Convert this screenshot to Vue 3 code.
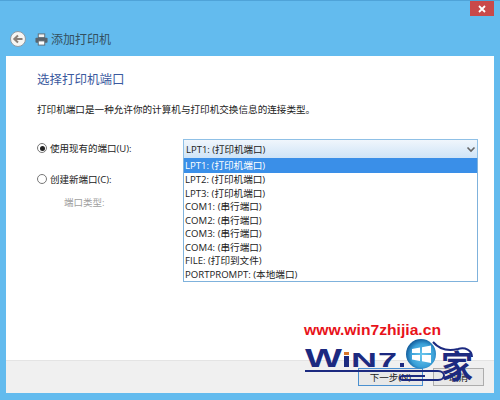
<template>
  <div class="window">
    <div class="titlebar">
      <button class="close">
        <svg width="10" height="10" viewBox="0 0 10 10">
          <path d="M2 2 L8 8 M8 2 L2 8" stroke="#fff" stroke-width="1.8" />
        </svg>
      </button>
      <div class="nav">
        <svg width="20" height="20" viewBox="0 0 20 20">
          <circle cx="10" cy="10" r="7.5" fill="#f7f5f2" stroke="#8d9aa5" stroke-width="1" />
          <path d="M14.5 10 H6.5 M10 6.5 L6.3 10 L10 13.5" fill="none" stroke="#8b8078" stroke-width="2" />
        </svg>
        <svg class="printer" width="13" height="13" viewBox="0 0 14 14">
          <rect x="3.5" y="1" width="7" height="4" fill="#f2f2f2" stroke="#5f6b74" />
          <rect x="0.5" y="5" width="13" height="5.5" rx="1" fill="#59646d" />
          <rect x="3.5" y="8.5" width="7" height="4.5" fill="#fff" stroke="#5f6b74" />
        </svg>
        <span class="wizard-title">添加打印机</span>
      </div>
    </div>

    <div class="panel">
      <div class="content">
        <h1 class="heading">选择打印机端口</h1>
        <p class="desc">打印机端口是一种允许你的计算机与打印机交换信息的连接类型。</p>

        <div class="form">
          <div class="options">
            <label class="radio-row">
              <span class="radio checked"></span>
              <span>使用现有的端口(U):</span>
            </label>
            <label class="radio-row second">
              <span class="radio"></span>
              <span>创建新端口(C):</span>
            </label>
            <div class="port-type">端口类型:</div>
          </div>

          <div class="select">
            <div class="select-box">
              <span>{{ ports[0] }}</span>
              <svg width="10" height="7" viewBox="0 0 10 7">
                <path d="M1.5 1.5 L5 5 L8.5 1.5" fill="none" stroke="#666" stroke-width="1.6" />
              </svg>
            </div>
            <ul class="dropdown">
              <li
                  v-for="port, idx in ports"
                  :key="port"
                  :class="{ active: idx === 0 }">
                {{ port }}
              </li>
            </ul>
          </div>
        </div>
      </div>

      <div class="footer">
        <button class="btn primary">下一步(N)</button>
        <button class="btn">取消</button>
      </div>
    </div>

    <!-- site watermark, drawn in its own coordinates over the bottom right corner -->
    <svg class="watermark" width="190" height="75" viewBox="0 0 190 75">
      <defs>
        <radialGradient id="orb" cx="0.55" cy="0.55" r="0.55">
          <stop offset="0" stop-color="#6cc8ee" />
          <stop offset="0.7" stop-color="#3aa0d8" />
          <stop offset="1" stop-color="#15609f" />
        </radialGradient>
      </defs>
      <text class="wm-url" x="4" y="15" textLength="137" lengthAdjust="spacingAndGlyphs">www.win7zhijia.cn</text>
      <text class="wm-big" x="5" y="47" font-size="26" textLength="37" lengthAdjust="spacingAndGlyphs">W</text>
      <rect x="44" y="32" width="5" height="3" fill="#d9772b" />
      <rect x="44" y="36" width="5" height="11" fill="#1c2a80" />
      <text class="wm-big" x="51" y="47" font-size="21" textLength="26" lengthAdjust="spacingAndGlyphs">N</text>
      <text class="wm-big" x="78" y="47" font-size="21" textLength="19" lengthAdjust="spacingAndGlyphs">7</text>
      <rect x="100" y="43" width="4" height="4" fill="#1c2a80" />
      <circle cx="121" cy="34" r="15" fill="url(#orb)" />
      <path d="M112 29 L120 27.5 V33 H112Z M122 27.2 L131 25.5 V33 H122Z M112 35 H120 V41 L112 39.5Z M122 35 H131 V43 L122 41.3Z" fill="#fff" />
      <path d="M133 22 C140 30 150 31 158 29 C165 27 172 30 172 37" fill="none" stroke="#1c2a80" stroke-width="2" />
      <text class="wm-jia" x="141" y="58">家</text>
      <path d="M5 51 H138 C146 51 146 60 138 60 H103 C99 60 99 56 103 56 H125" fill="none" stroke="#1c2a80" stroke-width="2" />
    </svg>
  </div>
</template>

<script setup>
  const ports = [
    'LPT1: (打印机端口)',
    'LPT2: (打印机端口)',
    'LPT3: (打印机端口)',
    'COM1: (串行端口)',
    'COM2: (串行端口)',
    'COM3: (串行端口)',
    'COM4: (串行端口)',
    'FILE: (打印到文件)',
    'PORTPROMPT: (本地端口)'
  ];
</script>

<style>
html, body {
  margin: 0;
  background: #63bbee;
}
</style>

<style scoped>
.window {
  position: relative;
  display: flex;
  flex-direction: column;
  box-sizing: border-box;
  width: 500px;
  height: 400px;
  overflow: hidden;
  padding: 0 6px 7px 6px;
  border-top: 1px solid #4fa3d8;
  background: #63bbee;
  font-family: "Open Sans", "Noto Sans CJK SC", sans-serif;
  font-size: 9.5px;
  color: #222;
}

.titlebar {
  flex: none;
  position: relative;
  height: 55px;
  overflow: hidden;
}

.close {
  position: absolute;
  top: 0;
  right: 0;
  display: flex;
  align-items: center;
  justify-content: center;
  width: 24px;
  height: 15px;
  padding: 0;
  border: none;
  background: #c9494a;
}

.nav {
  display: flex;
  align-items: center;
  height: 20px;
  margin-top: 28px;
  padding-left: 2px;
}

.printer {
  margin-left: 7px;
}

.wizard-title {
  margin-left: 3px;
  font-size: 12px;
  color: #34505f;
}

.panel {
  display: flex;
  flex: 1;
  flex-direction: column;
  min-height: 0;
  background: #fff;
}

.content {
  flex: 1;
  padding: 15px 0 0 31px;
}

.heading {
  margin: 0;
  font-size: 12.5px;
  font-weight: 400;
  line-height: 18px;
  color: #3b5a9e;
}

.desc {
  margin: 14px 0 0;
  font-size: 9.6px;
  line-height: 14px;
}

.form {
  display: flex;
  margin-top: 22px;
}

.options {
  width: 146px;
  padding-top: 2px;
}

.radio-row {
  display: flex;
  align-items: center;
  gap: 3px;
  height: 14px;
}

.radio-row.second {
  margin-top: 17px;
}

.radio {
  display: flex;
  align-items: center;
  justify-content: center;
  box-sizing: border-box;
  width: 10px;
  height: 10px;
  border: 1px solid #777;
  border-radius: 50%;
  background: #fff;
}

.radio.checked::after {
  content: '';
  width: 5px;
  height: 5px;
  border-radius: 50%;
  background: #222;
}

.port-type {
  margin: 10px 0 0 27px;
  line-height: 14px;
  color: #a0a0a0;
}

.select {
  position: relative;
  width: 295px;
}

.select-box {
  display: flex;
  align-items: center;
  justify-content: space-between;
  box-sizing: border-box;
  height: 19px;
  padding: 0 1px 0 2px;
  border: 1px solid #8fc0e6;
  border-bottom: none;
  background: linear-gradient(#f0f6fc, #cfe4f7);
}

.dropdown {
  position: absolute;
  top: 19px;
  left: 0;
  right: 0;
  margin: 0;
  padding: 0;
  border: 1px solid #7fb2dc;
  border-top: none;
  background: #fff;
  font-size: 9.6px;
  list-style: none;
}

.dropdown li {
  height: 13.5px;
  padding-left: 1px;
  line-height: 13.5px;
  color: #222;
}

.dropdown li.active {
  height: 15px;
  line-height: 15px;
  background: #3a8fe8;
  color: #fff;
}

.footer {
  display: flex;
  flex: none;
  justify-content: flex-end;
  gap: 10px;
  box-sizing: border-box;
  height: 33px;
  padding: 7px 10px 0 0;
  border-top: 1px solid #e4e4e4;
  background: #f0f0f0;
}

.btn {
  box-sizing: border-box;
  width: 51px;
  height: 18px;
  padding: 0;
  border: 1px solid #adadad;
  background: #e8e8e8;
  font: inherit;
  color: #222;
}

.btn.primary {
  width: 65px;
  border-color: #4a90d0;
}

.watermark {
  position: absolute;
  top: 319px;
  left: 300px;
}

.wm-url {
  font-family: "Liberation Sans", sans-serif;
  font-size: 15.5px;
  font-weight: 700;
  fill: #e8131a;
}

.wm-big {
  font-family: "Liberation Sans", sans-serif;
  font-weight: 700;
  fill: #1c2a80;
}

.wm-jia {
  font-family: "Noto Sans CJK SC", sans-serif;
  font-size: 32px;
  font-weight: 700;
  fill: #1c2a80;
}
</style>
